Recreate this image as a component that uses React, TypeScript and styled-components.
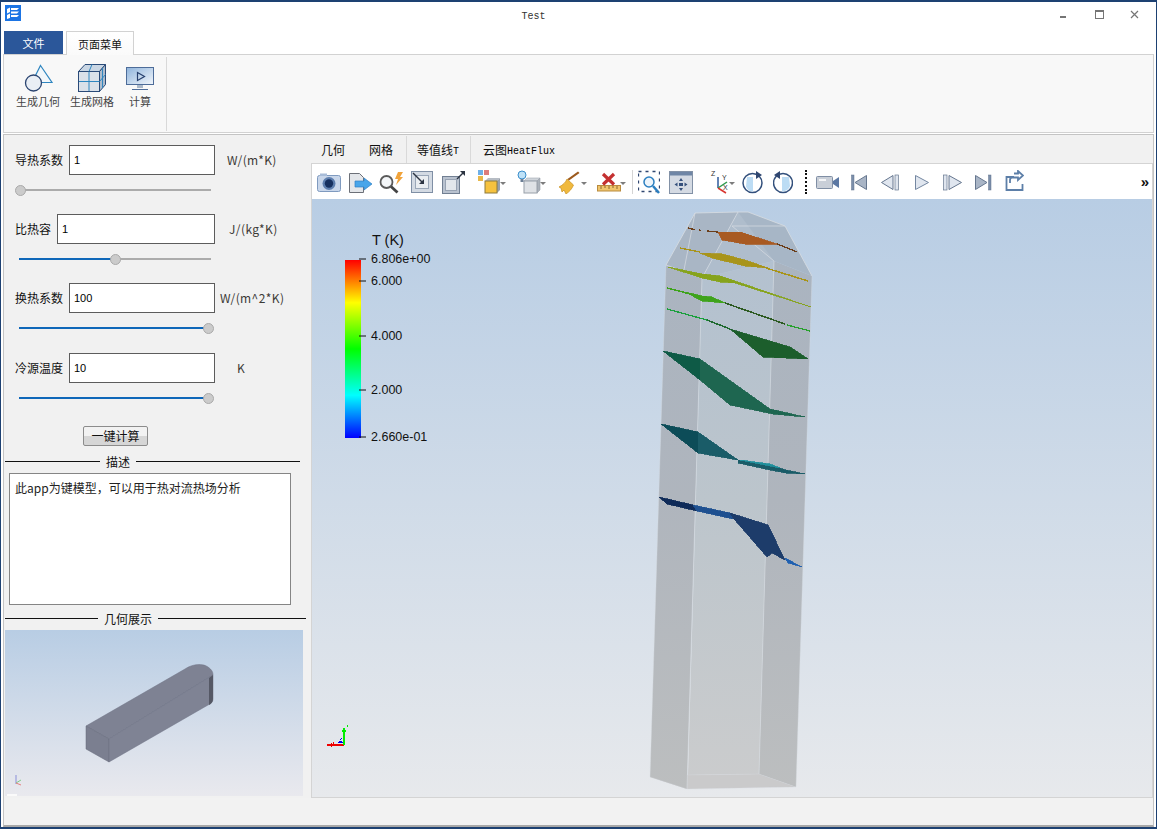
import React from "react";
import styled, { createGlobalStyle } from "styled-components";

const cjk = `"Noto Sans CJK SC", "Noto Sans", sans-serif`;

const Global = createGlobalStyle`
  html, body { margin: 0; padding: 0; background: #fff; }
  body { font-family: ${cjk}; font-size: 12px; color: #111; }
  * { box-sizing: border-box; }
`;

const Window = styled.div`
  width: 1157px; height: 829px; border: 1px solid #1d4172; border-top-width: 2px; border-bottom-width: 2px;
  background: #fff; display: flex; flex-direction: column; padding: 0 2px; overflow: hidden;
`;
const TitleBar = styled.div`
  height: 28px; display: flex; align-items: center; padding-left: 2px; flex: none;
`;
const AppIcon = styled.svg`
  width: 16px; height: 16px; flex: none; display: block; align-self: flex-start; margin-top: 3px;
`;
const Title = styled.div`
  flex: 1; text-align: center; font: 10px "Liberation Mono", monospace; color: #333; padding-top: 1px;
`;
const WinControls = styled.div`
  width: 108px; display: flex; align-items: center; height: 100%; flex: none;
`;
const WinButton = styled.svg`
  width: 36px; height: 28px; display: block; flex: none; color: #757575;
`;
const TabStrip = styled.div`
  height: 24px; display: flex; align-items: flex-end; padding-left: 1px; flex: none;
`;
const FileTab = styled.div`
  width: 59px; height: 23px; background: #2b579a; color: #fff; font-size: 11px; display: flex;
  align-items: center; justify-content: center;
`;
const PageTab = styled.div`
  width: 68px; height: 24px; margin-left: 3px; margin-bottom: -1px; border: 1px solid #d2d2d2; border-bottom: 0;
  background: linear-gradient(#fff, #fafafa); font-size: 11px; display: flex; align-items: center; justify-content: center;
  position: relative; z-index: 1; color: #111;
`;
const Ribbon = styled.div`
  height: 79px; flex: none; background: #f8f8f8; border: 1px solid #d2d2d2; padding: 2px 0 1px 0; display: flex;
`;
const RibbonGroup = styled.div`
  width: 163px; border-right: 1px solid #d9d9d9; display: flex; padding: 6px 0 0 12px; align-items: flex-start;
`;
const RibbonButton = styled.div<{ $gap: number }>`
  width: 44px; margin-left: ${(p) => p.$gap}px; display: flex; flex-direction: column; align-items: center;
  font-size: 11px; color: #444; line-height: 14px;
`;
const RibbonIcon = styled.svg`
  width: 44px; height: 29px; display: block; margin-bottom: 2px;
`;
const Main = styled.div`
  margin-top: 1px; height: 693px; flex: none; border: 1px solid #c4c4c4; border-bottom: 2px solid #a8a8a8; background: #f1f1f1;
  display: flex; flex-direction: column;
`;
const Workspace = styled.div`
  height: 663px; display: flex; flex: none;
`;
const LeftPanel = styled.div`
  width: 307px; flex: none; padding-top: 10px; display: flex; flex-direction: column;
`;
const FormRow = styled.div`
  height: 30px; display: flex; align-items: center; padding-left: 11px; flex: none;
`;
const FieldLabel = styled.label<{ $w: number }>`
  width: ${(p) => p.$w}px; margin-right: 6px; padding-bottom: 2px; font-size: 12px; color: #111; flex: none; white-space: nowrap;
`;
const Field = styled.div<{ $w: number }>`
  width: ${(p) => p.$w}px; height: 30px; background: #fff; border: 1px solid #5c5c5c; font: 11px "Liberation Sans", sans-serif;
  color: #000; padding-left: 4px; display: flex; align-items: center; flex: none;
`;
const Unit = styled.span<{ $gap: number }>`
  margin-left: ${(p) => p.$gap}px; padding-bottom: 2px; font-size: 12px; color: #3c3a36; white-space: nowrap; letter-spacing: 0.4px;
`;
const SliderBox = styled.div<{ $bottom: number }>`
  position: relative; height: 11px; width: 192px; margin: 10px 0 ${(p) => p.$bottom}px 15px; flex: none;
`;
const SliderTrack = styled.div`
  position: absolute; left: 0; right: 0; top: 4px; height: 2px; background: #ababab;
`;
const SliderFill = styled.div`
  position: absolute; left: 0; top: 4px; height: 2px; background: #0f67b9;
`;
const SliderHandle = styled.div`
  position: absolute; top: 0; width: 11px; height: 11px; border-radius: 50%; background: #cbcbcb; border: 1px solid #aaa;
`;
const CalcButton = styled.button`
  width: 65px; height: 20px; margin: 22px 0 0 79px; flex: none; padding: 0 0 2px; font: 12px ${cjk}; color: #111;
  border: 1px solid #8c8c8c; border-radius: 2px; background: linear-gradient(#f2f2f2 50%, #d6d6d6 50%);
`;
const SectionHead = styled.div<{ $w: number; $left: number; $top: number }>`
  width: ${(p) => p.$w}px; margin: ${(p) => p.$top}px 0 0 1px; height: 16px; display: flex; align-items: center; flex: none;
  font-size: 12px; color: #111; &::before, &::after { content: ""; height: 1px; background: #111; }
  &::before { width: ${(p) => p.$left}px; margin-right: 6px; } &::after { flex: 1; margin-left: 6px; }
`;
const Description = styled.div`
  width: 282px; height: 132px; margin: 4px 0 0 5px; background: #fff; border: 1px solid #858585; padding: 5px 5px; font-size: 12px;
  line-height: 18px; color: #222; flex: none;
`;
const Preview = styled.div`
  width: 298px; height: 166px; margin: 4px 0 0 1px; background: linear-gradient(#b8cde4, #e9e9ee); flex: none;
`;
const DrawingSvg = styled.svg`
  display: block; width: 100%; height: 100%;
`;
const RightPanel = styled.div`
  flex: 1; display: flex; flex-direction: column; min-width: 0;
`;
const ViewTabs = styled.div`
  height: 28px; display: flex; flex: none; align-items: stretch; padding-top: 1px;
`;
const ViewTab = styled.div<{ $pad: number; $sep?: boolean; $gap?: number }>`
  padding: 0 ${(p) => p.$pad}px; margin-left: ${(p) => p.$gap ?? 0}px; display: flex; align-items: center; font-size: 12px;
  color: #111; white-space: nowrap; ${(p) => (p.$sep ? "border-left: 1px solid #d9d9d9;" : "")}
`;
const Mono = styled.span`
  font: 10px "Liberation Mono", monospace; color: #000; padding-top: 3px;
`;
const Pane = styled.div`
  flex: 1; border: 1px solid #d4d4d4; display: flex; flex-direction: column; min-height: 0;
`;
const Toolbar = styled.div`
  height: 35px; flex: none; background: #fff; display: flex; align-items: center; padding-left: 5px;
`;
const ToolSlot = styled.svg<{ $gap: number; $w: number }>`
  width: ${(p) => p.$w}px; height: 24px; margin-left: ${(p) => p.$gap}px; flex: none; display: block;
`;
const ToolSep = styled.div<{ $gap: number }>`
  width: 1px; height: 24px; background: #d4d4d4; margin-left: ${(p) => p.$gap}px; flex: none;
`;
const ToolDots = styled.div<{ $gap: number }>`
  width: 2px; height: 24px; border-left: 2px dotted #111; margin-left: ${(p) => p.$gap}px; flex: none;
`;
const Chevrons = styled.div`
  margin-left: auto; margin-right: 3px; font: bold 15px "Liberation Sans", sans-serif; color: #111; line-height: 14px;
`;
const Viewport = styled.div`
  flex: 1; min-height: 0; background: linear-gradient(#b8cde4, #e7e9ec);
`;
const StatusBar = styled.div`
  flex: 1; background: #f2f2f2;
`;

const Slider = ({ v, bottom }: { v: number; bottom: number }) => {
  const center = 1 + v * 188;
  return (
    <SliderBox $bottom={bottom}>
      <SliderTrack />
      <SliderFill style={{ width: center }} />
      <SliderHandle style={{ left: center - 5.5 }} />
    </SliderBox>
  );
};

const Caret = ({ x, y = 12 }: { x: number; y?: number }) => <path d={`M${x} ${y}h6l-3 3z`} fill="#7c7c7c" />;

const GreyCube = () => (
  <>
    <path d="M7 11l3-3h13l-3 3z" fill="#cfd4da" stroke="#a3aab3" strokeWidth=".6" />
    <path d="M20 11l3-3v12l-3 3z" fill="#aab1b9" stroke="#98a0a9" strokeWidth=".6" />
    <rect x="7" y="11" width="13" height="12" fill="#dfe2e6" stroke="#98a0a9" />
  </>
);

type Tool = { w: number; gap: number; draw: React.ReactNode };

const tools: (Tool | "sep" | "dots")[] = [
  { w: 24, gap: 0, draw: <><rect x=".5" y="5.5" width="23" height="16" rx="2" fill="#c8d6ea" stroke="#7f9abf" /><rect x="3" y="3.5" width="7" height="2.5" fill="#a8bcd8" /><circle cx="12" cy="13.5" r="6.5" fill="#5d7eae" /><circle cx="12" cy="13.5" r="4.2" fill="#16305f" /></> },
  { w: 23, gap: 8, draw: <><path d="M.5 3.5h10l4 4v15H.5z" fill="#e3e6ea" stroke="#6c7078" /><path d="M6 11h9V8l8 6-8 6v-3H6z" fill="#47a5ea" stroke="#2e7fc4" strokeWidth=".7" /></> },
  { w: 24, gap: 7, draw: <><circle cx="7.5" cy="12" r="6" fill="#f4f6f8" stroke="#5a5a5a" strokeWidth="1.800" /><path d="M12 16.500l6.500 6" stroke="#444" strokeWidth="2.800" /><path d="M19 2h5l-3 5h3l-7 8 2-6h-3z" fill="#f1a33a" /></> },
  { w: 22, gap: 8, draw: <><rect x=".5" y="1.5" width="21" height="21" fill="#d3dae3" stroke="#7f8fa5" /><rect x="4.5" y="5.5" width="13" height="13" fill="#e9edf1" stroke="#9aa7b8" /><path d="M2 3l10 10" stroke="#2c3442" strokeWidth="1.4" /><path d="M13 9v5H8z" fill="#2c3442" /></> },
  { w: 23, gap: 9, draw: <><rect x=".5" y="6.5" width="17" height="17" fill="#b9c2cf" stroke="#717f92" /><rect x="3.5" y="9.5" width="11" height="11" fill="#e3e7ec" stroke="#98a3b3" /><path d="M15 9l7-7" stroke="#2c3442" strokeWidth="1.4" /><path d="M18 1h5v5z" fill="#2c3442" /></> },
  { w: 28, gap: 13, draw: <><rect x="0" y="0" width="5" height="5" fill="#6fb0e8" /><rect x="6" y="0" width="5" height="5" fill="#dd7d7d" /><rect x="0" y="6" width="5" height="5" fill="#e8b84a" /><path d="M7 11l3-3h12l-3 3z" fill="#b6bcc4" /><path d="M19 11l3-3v12l-3 3z" fill="#97a0ac" /><rect x="7" y="11" width="12" height="12" fill="#f6c23e" stroke="#8d7a3c" /><Caret x={22} y={12} /></> },
  { w: 29, gap: 11, draw: <><GreyCube /><circle cx="5" cy="5" r="4" fill="#bfe2f8" stroke="#3b8ecb" /><path d="M3.500 9h3v3h-3z" fill="#6c7f96" /><Caret x={23} /></> },
  { w: 29, gap: 12, draw: <><path d="M20 1.500L21.500 3 11 10.500 9.500 9z" fill="#9c5a1e" /><path d="M9 9l6.500 6C14 19 11 22 8 24L6 20 4 22 3 18 1 17C5 15 8 12 9 9z" fill="#f0b93e" stroke="#c98f1e" strokeWidth=".7" /><Caret x={23} /></> },
  { w: 29, gap: 10, draw: <><rect x=".5" y="15.500" width="23" height="5.500" fill="#f0c56c" stroke="#b98b3e" /><path d="M4 16v3M8 16v2M12 16v3M16 16v2M20 16v3" stroke="#8a6a30" /><path d="M6 4l11 10.500M17 4L6 14.500" stroke="#c43030" strokeWidth="3.200" /><Caret x={23} /></> },
  "sep",
  { w: 22, gap: 5, draw: <><rect x=".5" y="1.500" width="21" height="20" fill="none" stroke="#2f4670" strokeWidth="1.300" strokeDasharray="3 4" /><circle cx="11" cy="12" r="5" fill="#eef5fb" stroke="#2c7fc0" strokeWidth="1.500" /><path d="M15 16l6 7" stroke="#2c7fc0" strokeWidth="2.500" /></> },
  { w: 24, gap: 9, draw: <><rect x=".5" y="1.500" width="23" height="22" fill="#d4dae3" stroke="#8291a6" /><rect x="1" y="2" width="22" height="3.500" fill="#6f86a6" /><path d="M12 8l2 3h-4zM12 21l2-3h-4zM5.500 14.500l3-2v4zM18.500 14.500l-3-2v4z" fill="#35507c" /><rect x="10" y="13" width="4" height="3" fill="#35507c" /></> },
  { w: 26, gap: 16, draw: <><path d="M9 18V7" stroke="#2e5a9c" strokeWidth="1.500" /><path d="M9 18l9-6" stroke="#2b9a4a" strokeWidth="1.500" /><path d="M9 18l8 5" stroke="#d9352f" strokeWidth="1.500" /><text x="2" y="6" fontSize="7" fontFamily="Liberation Sans" fill="#333">Z</text><text x="13" y="10" fontSize="7" fontFamily="Liberation Sans" fill="#333">Y</text><text x="14" y="20" fontSize="7" fontFamily="Liberation Sans" fill="#333">X</text><Caret x={20} /></> },
  { w: 21, gap: 7, draw: <><circle cx="10.500" cy="13" r="9.500" fill="#fff" stroke="#33507c" strokeWidth="1.500" /><path d="M5 7h6v14.500c-3.500 0-6-2-7-5z" fill="#bcdcf4" /><path d="M14 1l6 4-6 4z" fill="#2f4670" /></> },
  { w: 20, gap: 10, draw: <><circle cx="10" cy="13" r="9.500" fill="#fff" stroke="#33507c" strokeWidth="1.500" /><path d="M9 7h7l1 9c-1 3-4 5.500-8 5.500z" fill="#bcdcf4" /><path d="M7 1L1 5l6 4z" fill="#2f4670" /></> },
  "dots",
  { w: 24, gap: 9, draw: <><rect x=".5" y="6.500" width="16" height="12" rx="1" fill="#c9cfd8" stroke="#7f8ea4" /><rect x="3" y="9" width="7" height="2" fill="#f4f5f7" /><path d="M17 11l6-4v11l-6-4z" fill="#5c78a3" /></> },
  { w: 16, gap: 11, draw: <><rect x=".5" y="5" width="2.500" height="15" fill="#7b8faa" stroke="#62738e" strokeWidth=".5" /><path d="M15.500 5.500v14L4 12.500z" fill="#a9b5c6" stroke="#66778f" /></> },
  { w: 18, gap: 14, draw: <><path d="M12 5.500v14L.5 12.500z" fill="#e0e6ef" stroke="#66778f" /><rect x="14" y="5" width="3.500" height="15" fill="#dfe5ee" stroke="#66778f" strokeWidth=".7" /></> },
  { w: 14, gap: 16, draw: <path d="M.5 5.500v14l13-7z" fill="#e0e6ef" stroke="#7487a1" /> },
  { w: 19, gap: 14, draw: <><rect x=".5" y="5" width="3.500" height="15" fill="#dfe5ee" stroke="#66778f" strokeWidth=".7" /><path d="M6 5.500v14l12.500-7z" fill="#e0e6ef" stroke="#66778f" /></> },
  { w: 17, gap: 13, draw: <><path d="M.5 5.500v14L12 12.500z" fill="#a9b5c6" stroke="#66778f" /><rect x="13.500" y="5" width="2.500" height="15" fill="#7b8faa" stroke="#62738e" strokeWidth=".5" /></> },
  { w: 19, gap: 13, draw: <path d="M9 7H1.500v13h16v-6M9 3.500h4V1l5 4.500-5 4.500V7.500H7c-1 0-2 1-2 2.500v3" fill="none" stroke="#5d7fa8" strokeWidth="1.800" /> },
];

const ViewToolbar = () => (
  <Toolbar>
    {tools.map((t, i) => {
      if (t === "sep") return <ToolSep key={i} $gap={6} />;
      if (t === "dots") return <ToolDots key={i} $gap={12} />;
      return (
        <ToolSlot key={i} $gap={t.gap} $w={t.w} viewBox={`0 0 ${t.w} 24`}>
          {t.draw}
        </ToolSlot>
      );
    })}
    <Chevrons>»</Chevrons>
  </Toolbar>
);

const poly = (p: string, fill: string) => <polygon points={p} fill={fill} />;
const slice = (p: string, fill: string) => <polygon points={p} fill={fill} stroke={fill} strokeWidth=".8" />;

const Scene = () => (
  <DrawingSvg viewBox="312 199 840 598">
    <defs>
      <linearGradient id="side" gradientUnits="userSpaceOnUse" x1="0" y1="210" x2="0" y2="790">
        <stop offset="0" stopColor="#a9b4c1" />
        <stop offset="0.5" stopColor="#afb5bd" />
        <stop offset="1" stopColor="#bcbebf" />
      </linearGradient>
      <linearGradient id="front" gradientUnits="userSpaceOnUse" x1="0" y1="210" x2="0" y2="790">
        <stop offset="0" stopColor="#b1c0d0" />
        <stop offset="0.5" stopColor="#bcc5cc" />
        <stop offset="1" stopColor="#cbcccd" />
      </linearGradient>
      <linearGradient id="legend" x1="0" y1="1" x2="0" y2="0">
        <stop offset="0" stopColor="#0000ff" />
        <stop offset="0.24" stopColor="#00ffff" />
        <stop offset="0.5" stopColor="#00ff00" />
        <stop offset="0.76" stopColor="#ffff00" />
        <stop offset="1" stopColor="#ff0000" />
      </linearGradient>
    </defs>
    {poly("650,777 687,789 796,787 759,774 688,775", "#cacacb")}
    {poly("666,265 702,278 687,789 650,777", "url(#side)")}
    {poly("702,278 774,261 759,774 688,775", "url(#front)")}
    {poly("774,261 812,276 796,787 759,774", "url(#side)")}
    {poly("695,213 738,212 702,278 666,265", "#a9b6c5")}
    {poly("738,212 785,226 774,261 702,278", "#afbdcc")}
    {poly("748,212 785,226 812,276 774,261 738,212", "#a7b6c6")}
    <g fill="none" stroke="#d8dde2" strokeWidth="1">
      <path d="M666 265L695 213L738 212L748 212L785 226L812 276" opacity=".8" />
      <path d="M666 265L702 278L738 212M774 261L732 226H785M695 213L684 270" opacity=".7" />
      <path d="M702 278L687 789M774 261L759 774" opacity=".6" />
      <path d="M666 265L650 777M812 276L796 787" opacity=".35" />
      <path d="M650 777L687 789L796 787L759 774L688 775" opacity=".25" />
    </g>
    <g shapeRendering="crispEdges">
      <path d="M688 228l4 1M692 229l3 .500M699 230l2 .300M707 231l11 1M777 244l20 8" stroke="#6b3d18" strokeWidth="1.300" fill="none" />
      {slice("718,232 740,232 777,244 745,244 722,240", "#a85a22")}
      <path d="M680 248l20 4M766 268l42 13" stroke="#a8941a" strokeWidth="1.500" fill="none" />
      {slice("700,253 722,254 745,260 768,268 745,266 712,258", "#a8941a")}
      {slice("668,267 702,274 720,276 735,281 811,307 735,283 720,282 702,278", "#86a31c")}
      <path d="M667 288l43 11" stroke="#3ea31c" strokeWidth="1.500" fill="none" />
      {slice("685,292 702,296 712,297 725,303 702,301", "#3ea31c")}
      <path d="M725 303L785 324" stroke="#2d5a22" strokeWidth="1.500" fill="none" />
      <path d="M787 325l23 6" stroke="#27a02c" strokeWidth="1.300" fill="none" />
      <path d="M667 309l40 11" stroke="#1aa03c" strokeWidth="1.300" fill="none" />
      <path d="M707 320l23 9" stroke="#1f6a30" strokeWidth="1.500" fill="none" />
      {slice("730,329 790,347 808,359 763,357", "#1c5e2c")}
      {slice("663,351 700,359 700,380", "#0e5a46")}
      {slice("700,359 770,409 805,417 773,414 730,405 700,380", "#1e6650")}
      {slice("661,424 698,432 698,453", "#0c4c58")}
      {slice("698,432 738,460 698,453", "#1a5c68")}
      {slice("738,460 770,465 786,470 805,474 786,473 770,470 738,463", "#1a5c68")}
      {slice("740,460 770,464 780,468 760,464", "#20909c")}
      {slice("659,497 693,505 697,511 667,504", "#0e2a58")}
      {slice("693,505 730,513 733,519 697,511", "#1e5090")}
      {slice("730,513 768,525 785,560 772,553 767,557 733,518", "#1d3c6a")}
      {slice("785,558 802,567 788,563", "#2060b0")}
    </g>
    <rect x="345" y="260" width="16" height="178" fill="url(#legend)" />
    <path d="M359 259h7M359 281h7M359 336h7M359 390h7M359 437h7" stroke="#111" strokeWidth="1" />
    <g fontFamily="Liberation Sans, sans-serif" fontSize="12.500" fill="#111">
      <text x="371" y="262.500">6.806e+00</text>
      <text x="371" y="284.500">6.000</text>
      <text x="371" y="339.500">4.000</text>
      <text x="371" y="394">2.000</text>
      <text x="371" y="440.500">2.660e-01</text>
      <text x="372" y="245" fontSize="14.500">T (K)</text>
    </g>
    <g shapeRendering="crispEdges">
      <path d="M327 745h17" stroke="#ee0000" strokeWidth="2" />
      <path d="M331 743v4M333 742v3" stroke="#ee0000" />
      <path d="M344 745v-17" stroke="#00ee00" strokeWidth="2" />
      <path d="M342 731h4M347 726h1" stroke="#00ee00" strokeWidth="2" />
      <path d="M337 743h6l-2-2h-2z" fill="#0000ee" />
      <path d="M340 740l2-2" stroke="#0000ee" />
    </g>
  </DrawingSvg>
);

const KeyShape = () => (
  <DrawingSvg viewBox="5 630 298 166">
    <path d="M86 726L185 669C192 664 203 663 208 667C212 670 213 672 213 675L109 739Z" fill="#7e8293" stroke="#6d7182" strokeWidth=".5" />
    <path d="M86 726L109 739V762L86 749Z" fill="#7b7f90" stroke="#656979" strokeWidth=".5" />
    <path d="M109 739L213 675V699C213 702 211 704 208 705L109 762Z" fill="#7f8394" stroke="#6d7182" strokeWidth=".5" />
    <path d="M209 678L213 675V699C213 702 211 704 209 705Z" fill="#555865" />
    <path d="M16 784V775" fill="none" strokeWidth="1" stroke="#8a8fd8" />
    <path d="M16 783l5-3" stroke="#7fca8a" />
    <path d="M16 783l5 2" stroke="#e58080" />
    <rect x="7" y="794" width="10" height="2" fill="#fafafa" />
  </DrawingSvg>
);

export default function App() {
  return (
    <>
      <Global />
      <Window>
        <TitleBar>
          <AppIcon viewBox="0 0 16 16">
            <rect width="16" height="16" fill="#1b74e4" />
            <path d="M2 4l3-1.500V7L2 8.500zM2 10l3-1.500V13L2 14zM6 3h8l-2 2H6zM6 6.500h8l-2 2H6zM6 10h8l-2 2H6z" fill="#fff" />
          </AppIcon>
          <Title>Test</Title>
          <WinControls>
            <WinButton viewBox="0 0 36 28">
              <rect x="14" y="14" width="6" height="2" fill="currentColor" />
            </WinButton>
            <WinButton viewBox="0 0 36 28">
              <rect x="13.500" y="8.500" width="8" height="8" fill="none" stroke="currentColor" />
              <rect x="13" y="8" width="9" height="2" fill="currentColor" />
            </WinButton>
            <WinButton viewBox="0 0 36 28">
              <path d="M13 9l7 7M20 9l-7 7" stroke="currentColor" strokeWidth="1.200" />
            </WinButton>
          </WinControls>
        </TitleBar>
        <TabStrip>
          <FileTab>文件</FileTab>
          <PageTab>页面菜单</PageTab>
        </TabStrip>
        <Ribbon>
          <RibbonGroup>
            <RibbonButton $gap={0}>
              <RibbonIcon viewBox="16 63 44 29">
                <path d="M40.500 65.500L52 82.500H32z" fill="#f2f7fb" stroke="#2f86c0" strokeWidth="1.200" />
                <circle cx="33.500" cy="83" r="8" fill="#e9eef5" stroke="#2a4470" strokeWidth="1.300" />
              </RibbonIcon>
              生成几何
            </RibbonButton>
            <RibbonButton $gap={10}>
              <RibbonIcon viewBox="70 63 44 29">
                <path d="M78.500 71.500L85 64.500H105.500L99.500 71.500z" fill="#c9d6e4" stroke="#2a4a78" />
                <path d="M99.500 71.500L105.500 64.500V84.500L99.500 91.500z" fill="#aebccc" stroke="#2a4a78" />
                <rect x="78.500" y="71.500" width="21" height="20" fill="#dbe1e9" stroke="#2a4a78" />
                <path d="M89 72V91M79 81.500H99M92 64.500L89 71.500M102.500 68L102.500 88M99.500 81.500L105.500 74.500" stroke="#2f86c0" fill="none" />
              </RibbonIcon>
              生成网格
            </RibbonButton>
            <RibbonButton $gap={4}>
              <RibbonIcon viewBox="118 63 44 29">
                <defs>
                  <linearGradient id="mon" x1="0" y1="0" x2="1" y2="1">
                    <stop offset="0" stopColor="#8fb4dc" />
                    <stop offset="1" stopColor="#f2f6fb" />
                  </linearGradient>
                </defs>
                <rect x="126.500" y="67.500" width="27" height="17" fill="url(#mon)" stroke="#4d6c99" />
                <path d="M137.500 72.500l7 4-7 4z" fill="none" stroke="#27406e" strokeWidth="1.200" />
                <path d="M137 85h6v3h-6z" fill="#a9b7c8" />
                <path d="M132 89.500h16" stroke="#4d6c99" />
              </RibbonIcon>
              计算
            </RibbonButton>
          </RibbonGroup>
        </Ribbon>
        <Main>
          <Workspace>
            <LeftPanel>
              <FormRow>
                <FieldLabel $w={48}>导热系数</FieldLabel>
                <Field $w={146}>1</Field>
                <Unit $gap={12}>W/(m*K)</Unit>
              </FormRow>
              <Slider v={0} bottom={18} />
              <FormRow>
                <FieldLabel $w={36}>比热容</FieldLabel>
                <Field $w={158}>1</Field>
                <Unit $gap={14}>J/(kg*K)</Unit>
              </FormRow>
              <Slider v={0.51} bottom={18} />
              <FormRow>
                <FieldLabel $w={48}>换热系数</FieldLabel>
                <Field $w={146}>100</Field>
                <Unit $gap={5}>W/(m^2*K)</Unit>
              </FormRow>
              <Slider v={1} bottom={19} />
              <FormRow>
                <FieldLabel $w={48}>冷源温度</FieldLabel>
                <Field $w={146}>10</Field>
                <Unit $gap={22}>K</Unit>
              </FormRow>
              <Slider v={1} bottom={0} />
              <CalcButton>一键计算</CalcButton>
              <SectionHead $w={295} $left={95} $top={7}>描述</SectionHead>
              <Description>此app为键模型，可以用于热对流热场分析</Description>
              <SectionHead $w={301} $left={93} $top={5}>几何展示</SectionHead>
              <Preview>
                <KeyShape />
              </Preview>
            </LeftPanel>
            <RightPanel>
              <ViewTabs>
                <ViewTab $pad={10}>几何</ViewTab>
                <ViewTab $pad={10} $gap={4}>网格</ViewTab>
                <ViewTab $pad={10} $gap={3} $sep>等值线<Mono>T</Mono></ViewTab>
                <ViewTab $pad={12} $gap={1} $sep>云图<Mono>HeatFlux</Mono></ViewTab>
              </ViewTabs>
              <Pane>
                <ViewToolbar />
                <Viewport>
                  <Scene />
                </Viewport>
              </Pane>
            </RightPanel>
          </Workspace>
          <StatusBar />
        </Main>
      </Window>
    </>
  );
}
